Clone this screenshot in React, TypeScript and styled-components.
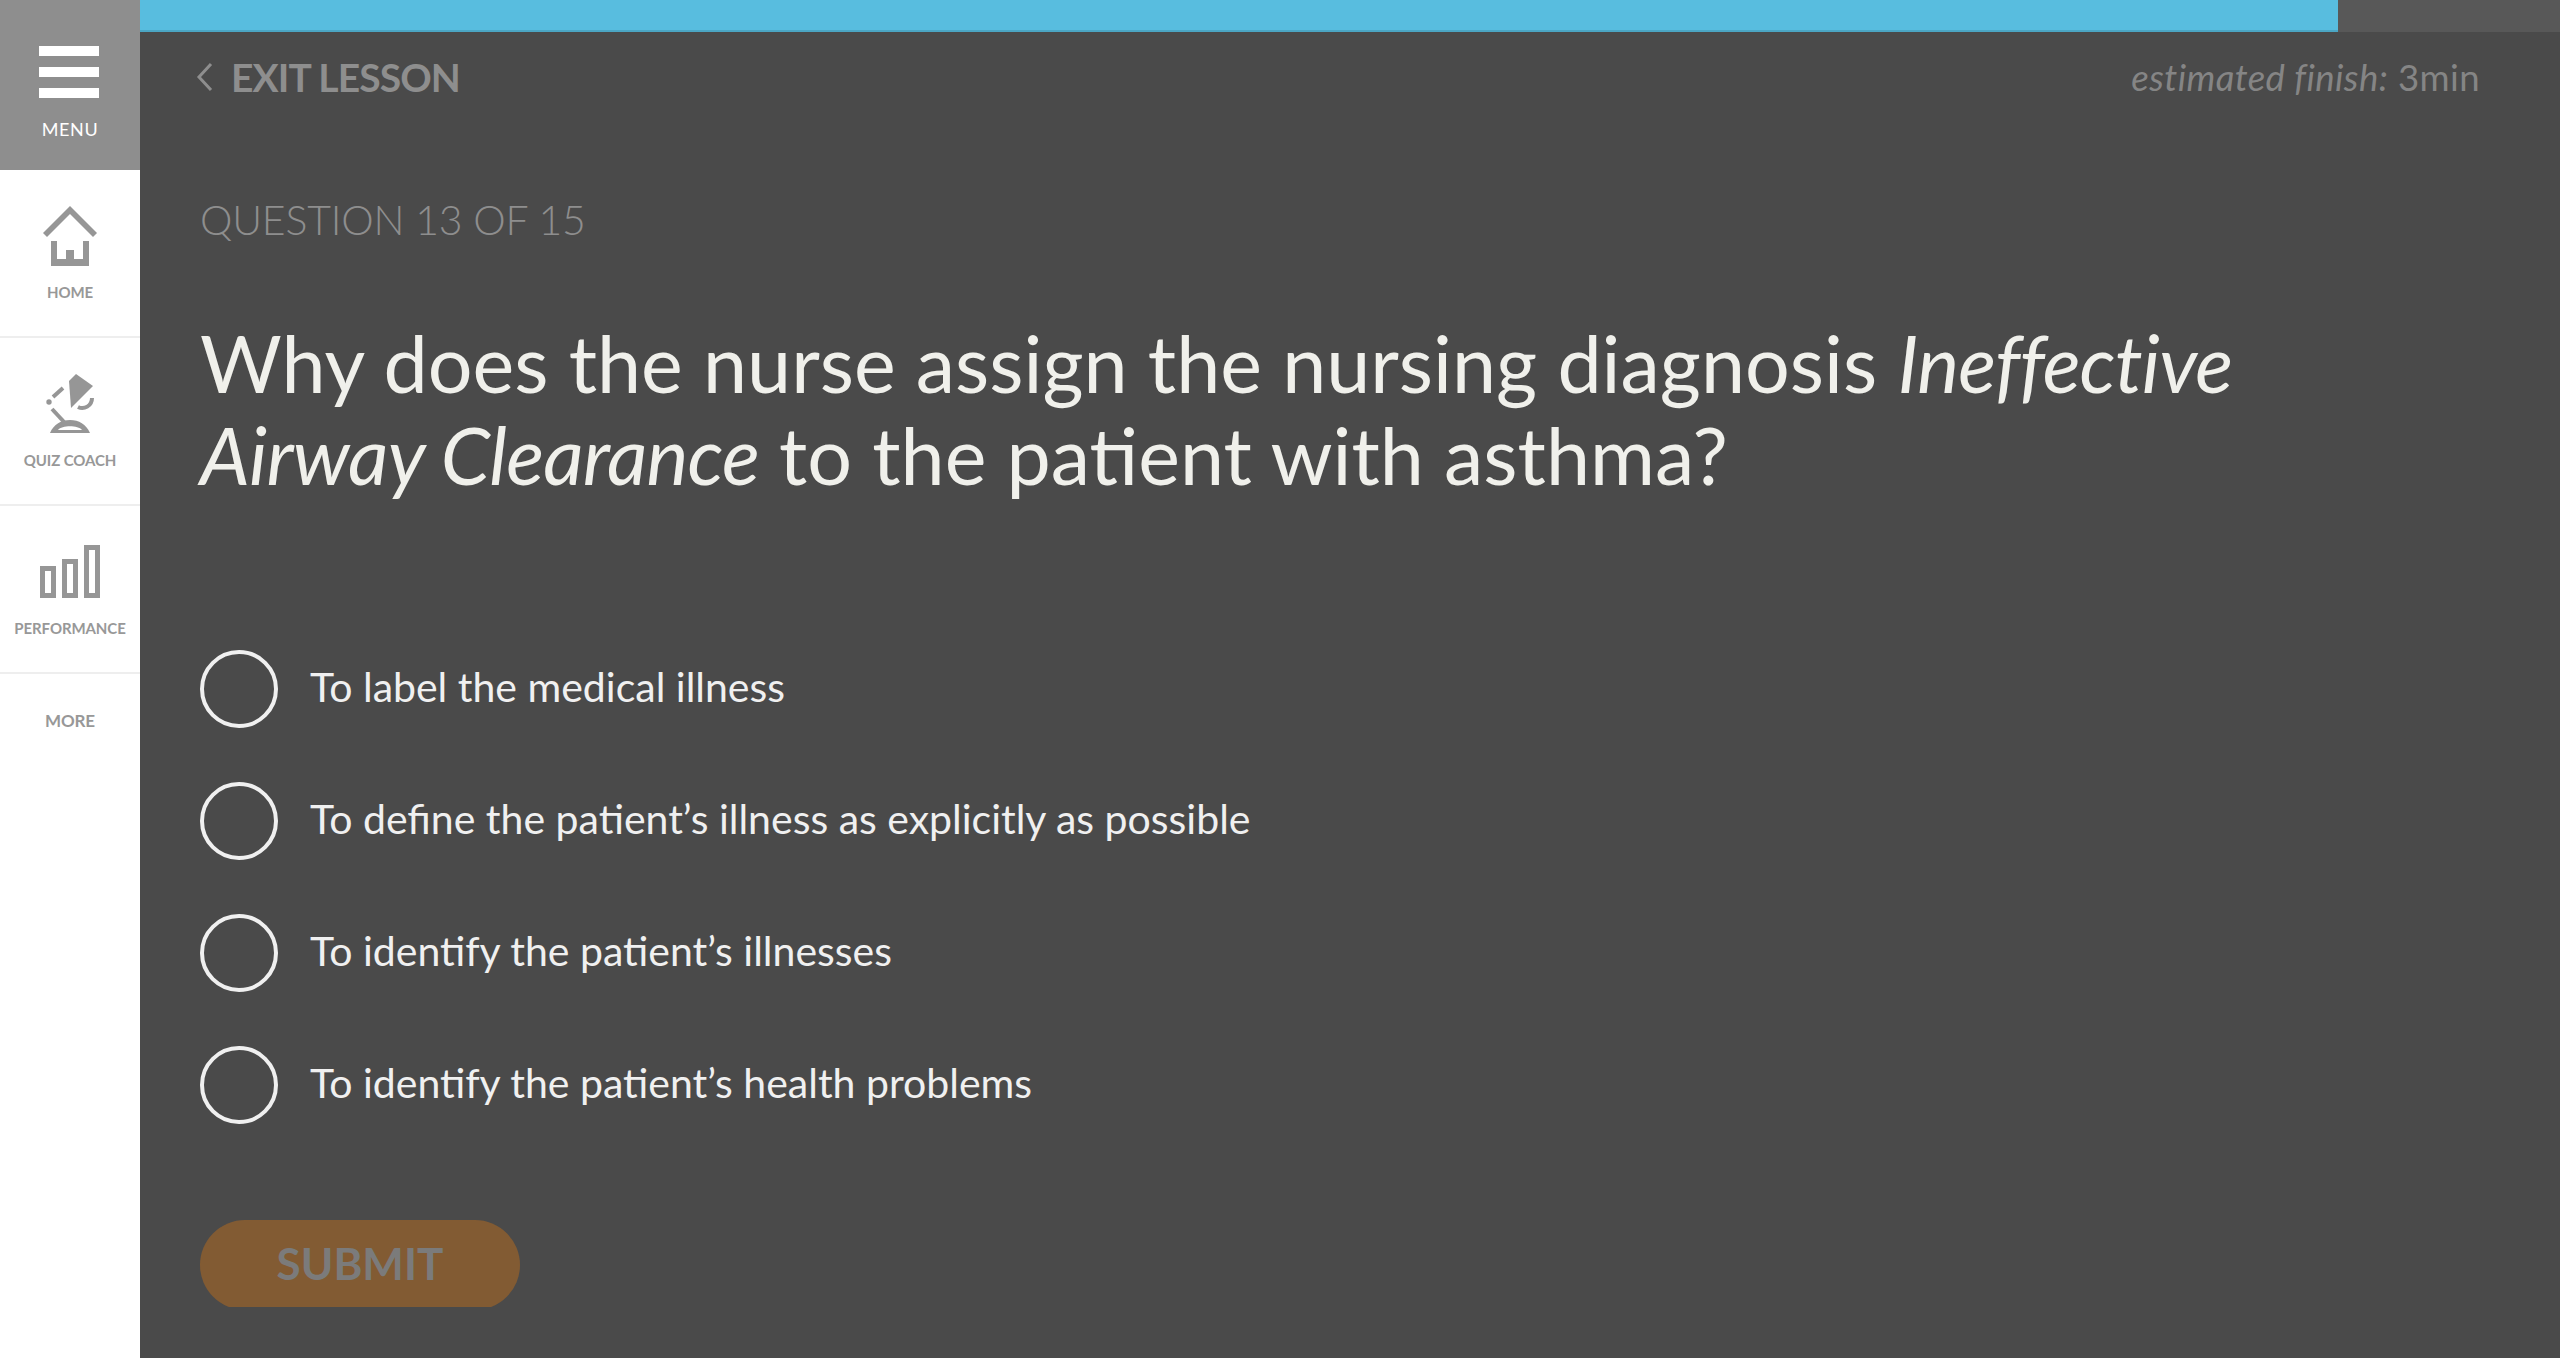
import React from 'react';
import styled, { createGlobalStyle } from 'styled-components';

const GlobalStyle = createGlobalStyle`
  html, body {
    margin: 0;
    padding: 0;
    height: 100%;
    background: #4a4a4a;
  }
  body {
    font-family: Lato, "Open Sans", "Liberation Sans", sans-serif;
  }
`;

const Page = styled.div`
  display: flex;
  width: 2560px;
  height: 1358px;
  overflow: hidden;
`;

const Sidebar = styled.nav`
  width: 140px;
  flex-shrink: 0;
  background: #fff;
  display: flex;
  flex-direction: column;
`;

const MenuButton = styled.div`
  height: 170px;
  background: #8e8e8e;
  display: flex;
  flex-direction: column;
  align-items: center;
  padding-top: 46px;
  box-sizing: border-box;
`;

const Hamburger = styled.div`
  width: 60px;
  display: flex;
  flex-direction: column;
  gap: 11px;
  margin-right: 2px;
`;

const HamburgerBar = styled.span`
  display: block;
  height: 10px;
  background: #fff;
`;

const MenuLabel = styled.div`
  margin-top: 20px;
  font-size: 18px;
  line-height: 22px;
  letter-spacing: 0.6px;
  color: #fff;
`;

const NavItem = styled.div`
  height: 168px;
  box-sizing: border-box;
  border-bottom: 2px solid #eeeeee;
  display: flex;
  flex-direction: column;
  align-items: center;
  padding-top: 34px;
`;

const NavIcon = styled.svg`
  display: block;
  width: 60px;
  height: 62px;
  fill: #969696;
  overflow: visible;
`;

const NavLabel = styled.div`
  margin-top: 17px;
  font-size: 15px;
  line-height: 18px;
  font-weight: 700;
  letter-spacing: -0.1px;
  color: #989898;
  white-space: nowrap;
`;

const MoreLabel = styled(NavLabel)`
  margin-top: 38px;
  align-self: center;
  font-size: 17px;
`;

const Main = styled.main`
  flex: 1;
  min-width: 0;
  background: #4a4a4a;
  display: flex;
  flex-direction: column;
`;

const ProgressTrack = styled.div`
  height: 32px;
  background: #585858;
  flex-shrink: 0;
`;

const ProgressFill = styled.div`
  height: 100%;
  box-sizing: border-box;
  background: #58bddf;
  border-bottom: 2px solid #4ba6c4;
`;

const Content = styled.div`
  padding: 0 80px 0 60px;
  display: flex;
  flex-direction: column;
`;

const TopRow = styled.div`
  height: 58px;
  margin-top: 16px;
  display: flex;
  align-items: center;
  justify-content: space-between;
`;

const ExitLink = styled.div`
  display: flex;
  align-items: center;
  gap: 17px;
  margin-left: -4px;
  font-size: 39px;
  font-weight: 700;
  letter-spacing: -0.9px;
  color: #8e8e8e;
`;

const Chevron = styled.svg`
  width: 18px;
  height: 30px;
  fill: none;
  stroke: #8e8e8e;
  stroke-width: 3;
`;

const Estimate = styled.div`
  font-size: 36.6px;
  letter-spacing: 0.4px;
  font-weight: 400;
  color: #858585;

  em {
    font-style: italic;
  }
`;

const QuestionCount = styled.div`
  margin-top: 86px;
  font-size: 41px;
  line-height: 56px;
  letter-spacing: -0.2px;
  font-weight: 300;
  color: #8e8e8e;
`;

const QuestionText = styled.h1`
  margin: 69px 0 0;
  max-width: 2260px;
  font-size: 79px;
  line-height: 92px;
  font-weight: 400;
  color: #f0f0eb;

  em {
    font-style: italic;
    letter-spacing: -0.8px;
  }
`;

const Options = styled.div`
  margin-top: 149px;
  display: flex;
  flex-direction: column;
  gap: 54px;
`;

const Option = styled.label`
  display: flex;
  align-items: center;
  gap: 32px;
  height: 78px;
`;

const Radio = styled.span`
  width: 78px;
  height: 78px;
  box-sizing: border-box;
  border: 4px solid #f0f0f0;
  border-radius: 50%;
  flex-shrink: 0;
`;

const OptionText = styled.span`
  font-size: 41px;
  font-weight: 400;
  color: #f0f0f0;
  margin-top: -5px;
`;

const SubmitClip = styled.div`
  margin-top: 96px;
  width: 320px;
  height: 87px;
  overflow: hidden;
`;

const SubmitButton = styled.div`
  height: 90px;
  border-radius: 45px;
  background: #825b33;
  color: #7b7b7b;
  font-size: 44px;
  font-weight: 700;
  display: flex;
  justify-content: center;
  align-items: center;
  padding-bottom: 4px;
  box-sizing: border-box;
`;

const answers = [
  'To label the medical illness',
  'To define the patient’s illness as explicitly as possible',
  'To identify the patient’s illnesses',
  'To identify the patient’s health problems',
];

const HomeIcon = () => (
  <NavIcon viewBox="0 0 60 62">
    <path d="M30 2 L57 29 L53 33 L30 10 L7 33 L3 29 Z" />
    <path d="M11 37 H17 V55 H26 V46 H34 V55 H43 V37 H49 V62 H11 Z" />
  </NavIcon>
);

const LampIcon = () => (
  <NavIcon viewBox="0 0 60 62">
    <path d="M29 9 L36 2 L53 14 L31 36 Z" />
    <path d="M13 25 L23 16" stroke="#969696" strokeWidth="4" />
    <circle cx="9" cy="30" r="2.7" />
    <path d="M12 37 L25 51" stroke="#969696" strokeWidth="4" />
    <path d="M38 35 C44 38 52 34 52 26" fill="none" stroke="#969696" strokeWidth="4" />
    <path fillRule="evenodd" d="M10 61 C14 52 21 48 30 48 C39 48 46 52 50 61 Z M18 58 C22 53 38 53 42 58 Z" />
  </NavIcon>
);

const BarsIcon = () => (
  <NavIcon viewBox="0 0 60 62">
    <path fillRule="evenodd" d="M0 26 H16 V58 H0 Z M5 31 V53 H11 V31 Z" />
    <path fillRule="evenodd" d="M22 19 H38 V58 H22 Z M27 24 V53 H33 V24 Z" />
    <path fillRule="evenodd" d="M44 5 H60 V58 H44 Z M49 10 V53 H55 V10 Z" />
  </NavIcon>
);

const App: React.FC = () => {
  return (
    <Page>
      <GlobalStyle />
      <Sidebar>
        <MenuButton>
          <Hamburger>
            <HamburgerBar />
            <HamburgerBar />
            <HamburgerBar />
          </Hamburger>
          <MenuLabel>MENU</MenuLabel>
        </MenuButton>
        <NavItem>
          <HomeIcon />
          <NavLabel>HOME</NavLabel>
        </NavItem>
        <NavItem>
          <LampIcon />
          <NavLabel>QUIZ COACH</NavLabel>
        </NavItem>
        <NavItem>
          <BarsIcon />
          <NavLabel>PERFORMANCE</NavLabel>
        </NavItem>
        <MoreLabel>MORE</MoreLabel>
      </Sidebar>
      <Main>
        <ProgressTrack>
          <ProgressFill style={{ width: `${(13 / 14.31) * 100}%` }} />
        </ProgressTrack>
        <Content>
          <TopRow>
            <ExitLink>
              <Chevron viewBox="0 0 18 30">
                <path d="M15 2 L3 15 L15 28" />
              </Chevron>
              EXIT LESSON
            </ExitLink>
            <Estimate>
              <em>estimated finish:</em> 3min
            </Estimate>
          </TopRow>
          <QuestionCount>QUESTION 13 OF 15</QuestionCount>
          <QuestionText>
            Why does the nurse assign the nursing diagnosis <em>Ineffective Airway Clearance</em> to the patient with asthma?
          </QuestionText>
          <Options>
            {answers.map(answer => (
              <Option key={answer}>
                <Radio />
                <OptionText>{answer}</OptionText>
              </Option>
            ))}
          </Options>
          <SubmitClip>
            <SubmitButton>SUBMIT</SubmitButton>
          </SubmitClip>
        </Content>
      </Main>
    </Page>
  );
};

export default App;
